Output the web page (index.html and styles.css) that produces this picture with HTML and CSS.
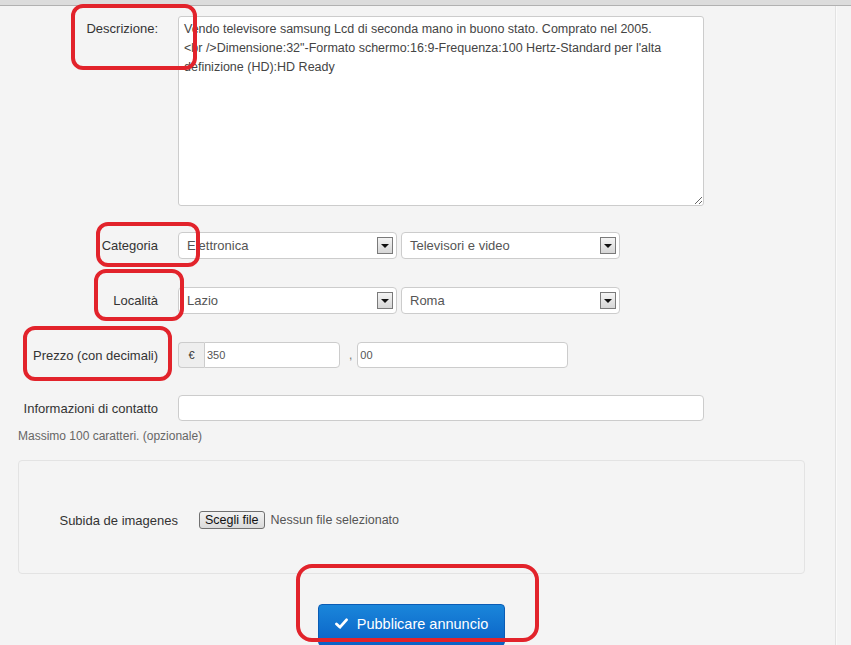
FILE: index.html
```html
<!DOCTYPE html>
<html lang="it">

<head>
    <meta charset="UTF-8">
    <meta name="viewport" content="width=device-width, initial-scale=1.0">
    <title>Pubblica annuncio</title>
    <link rel="stylesheet" href="styles.css">
</head>

<body>
    <div class="topbar"></div>
    <div class="page">
        <main class="content">
            <form class="form">
                <div class="row row-desc">
                    <label class="lbl">Descrizione:</label>
                    <textarea class="desc">Vendo televisore samsung Lcd di seconda mano in buono stato. Comprato nel 2005.
&lt;br /&gt;Dimensione:32"-Formato schermo:16:9-Frequenza:100 Hertz-Standard per l'alta definizione (HD):HD Ready</textarea>
                </div>
                <div class="row row-cat">
                    <label class="lbl">Categoria</label>
                    <div class="select"><span>Elettronica</span><i class="arrow"></i></div>
                    <div class="select"><span>Televisori e video</span><i class="arrow"></i></div>
                </div>
                <div class="row row-loc">
                    <label class="lbl">Località</label>
                    <div class="select"><span>Lazio</span><i class="arrow"></i></div>
                    <div class="select"><span>Roma</span><i class="arrow"></i></div>
                </div>
                <div class="row row-price">
                    <label class="lbl">Prezzo (con decimali)</label>
                    <div class="price">
                        <span class="addon">€</span>
                        <input type="text" class="input int" value="350">
                    </div>
                    <span class="comma">,</span>
                    <input type="text" class="input dec" value="00">
                </div>
                <div class="row row-contact">
                    <label class="lbl">Informazioni di contatto</label>
                    <input type="text" class="input contact">
                </div>
                <p class="help">Massimo 100 caratteri. (opzionale)</p>
                <div class="well">
                    <div class="row row-file">
                        <label class="lbl">Subida de imagenes</label>
                        <button type="button" class="file-btn">Scegli file</button>
                        <span class="file-name">Nessun file selezionato</span>
                    </div>
                </div>
                <div class="actions">
                    <button type="button" class="btn-primary">
                        <svg class="icon-ok" width="13" height="11" viewBox="0 0 13 11">
                            <path d="M1.5 6 L5 9.2 L11.5 1.8" fill="none" stroke="#fff" stroke-width="2.8" stroke-linecap="round" stroke-linejoin="round"/>
                        </svg>
                        Pubblicare annuncio
                    </button>
                </div>
            </form>
        </main>
        <aside class="side"></aside>
    </div>

    <!-- annotazioni rosse -->
    <div class="mark m-desc"></div>
    <div class="mark m-cat"></div>
    <div class="mark m-loc"></div>
    <div class="mark m-price"></div>
    <div class="mark m-btn"></div>
</body>

</html>
```

FILE: styles.css
```css
html,
body {
    margin: 0;
    padding: 0;
}

body {
    background: #f4f4f4;
    font-family: "Liberation Sans", Arial, sans-serif;
    font-size: 13px;
    color: #333;
    position: relative;
    height: 645px;
    overflow: hidden;
}

.topbar {
    height: 5px;
    background: #dcdcdc;
    border-bottom: 1px solid #b1b1b1;
}

.page {
    display: flex;
    height: 639px;
}

.content {
    width: 787px;
    padding: 0 30px 0 18px;
}

.side {
    flex: 1;
    border-left: 1px solid #e2e2e2;
    box-shadow: inset 1px 0 0 #fafafa;
}

.form {
    margin: 0;
}

.row {
    display: flex;
    align-items: center;
}

.lbl {
    width: 140px;
    margin-right: 20px;
    text-align: right;
    line-height: 25px;
    color: #333;
    flex: none;
}

.row-desc {
    align-items: flex-start;
    margin-top: 10px;
}

.row-desc .lbl {
    line-height: 26px;
}

.desc {
    width: 526px;
    height: 190px;
    box-sizing: border-box;
    border: 1px solid #cccccc;
    border-radius: 3px;
    background: #fff;
    padding: 3px 5px;
    font-family: "Liberation Sans", Arial, sans-serif;
    font-size: 12.5px;
    line-height: 19px;
    color: #444;
    margin: 0;
}

.row-cat {
    margin-top: 26px;
}

.row-loc {
    margin-top: 28px;
}

.select {
    width: 219px;
    height: 27px;
    box-sizing: border-box;
    border: 1px solid #cccccc;
    border-radius: 4px;
    background: #fff;
    display: flex;
    align-items: center;
    justify-content: space-between;
    padding: 0 3px 0 8px;
    color: #555;
    font-size: 13px;
    margin-right: 4px;
}

.arrow {
    width: 16px;
    height: 17px;
    box-sizing: border-box;
    border: 1px solid #7a7a7a;
    background: linear-gradient(#f4f4f4, #d6d6d6);
    display: flex;
    align-items: center;
    justify-content: center;
}

.arrow::after {
    content: "";
    border-left: 4px solid transparent;
    border-right: 4px solid transparent;
    border-top: 4px solid #111;
    margin-top: 1px;
}

.row-price {
    margin-top: 28px;
}

.price {
    display: flex;
}

.addon {
    width: 26px;
    height: 26px;
    box-sizing: border-box;
    border: 1px solid #cccccc;
    border-right: none;
    border-radius: 4px 0 0 4px;
    background: #eeeeee;
    font-size: 11px;
    line-height: 24px;
    text-align: center;
    color: #333;
}

.input {
    height: 26px;
    box-sizing: border-box;
    border: 1px solid #cccccc;
    border-radius: 4px;
    background: #fff;
    padding: 0 2px;
    font-family: "Liberation Sans", Arial, sans-serif;
    font-size: 11px;
    color: #555;
    margin: 0;
}

.int {
    width: 136px;
    border-radius: 0 4px 4px 0;
}

.comma {
    margin: 0 5px 0 9px;
    color: #777;
    font-size: 12px;
}

.dec {
    width: 211px;
}

.row-contact {
    margin-top: 27px;
}

.contact {
    width: 526px;
}

.help {
    margin: 6px 0 0;
    font-size: 12px;
    line-height: 18px;
    color: #666;
}

.well {
    margin-top: 15px;
    height: 114px;
    box-sizing: border-box;
    border: 1px solid #e3e3e3;
    border-radius: 4px;
    background: #f4f4f4;
    padding: 48px 19px 0;
}

.row-file {
    height: 22px;
}

.file-btn {
    height: 18px;
    padding: 0 5px;
    border: 1px solid #707070;
    border-radius: 3px;
    background: linear-gradient(#f2f2f2, #dadada);
    font-family: "Liberation Sans", Arial, sans-serif;
    font-size: 12.5px;
    color: #111;
    margin: 0 6px 0 1px;
}

.file-name {
    font-size: 12.5px;
    color: #555;
}

.actions {
    margin-top: 30px;
    text-align: center;
}

.btn-primary {
    width: 187px;
    height: 42px;
    border: 1px solid #0a5cb5;
    border-radius: 4px;
    background: linear-gradient(#1a86da, #0a62c6);
    color: #fff;
    font-family: "Liberation Sans", Arial, sans-serif;
    font-size: 14.5px;
    padding: 0 0 3px;
    display: inline-flex;
    align-items: center;
    justify-content: center;
    gap: 9px;
}

/* hand-drawn red frames */
.mark {
    position: absolute;
    border: 4px solid #e2232b;
    border-radius: 12px;
    box-sizing: border-box;
}

.m-desc {
    left: 71px;
    top: 4px;
    width: 126px;
    height: 66px;
}

.m-cat {
    left: 96px;
    top: 222px;
    width: 104px;
    height: 45px;
}

.m-loc {
    left: 94px;
    top: 269px;
    width: 90px;
    height: 52px;
}

.m-price {
    left: 23px;
    top: 326px;
    width: 149px;
    height: 55px;
}

.m-btn {
    left: 296px;
    top: 564px;
    width: 243px;
    height: 78px;
    border-radius: 16px;
}
```
